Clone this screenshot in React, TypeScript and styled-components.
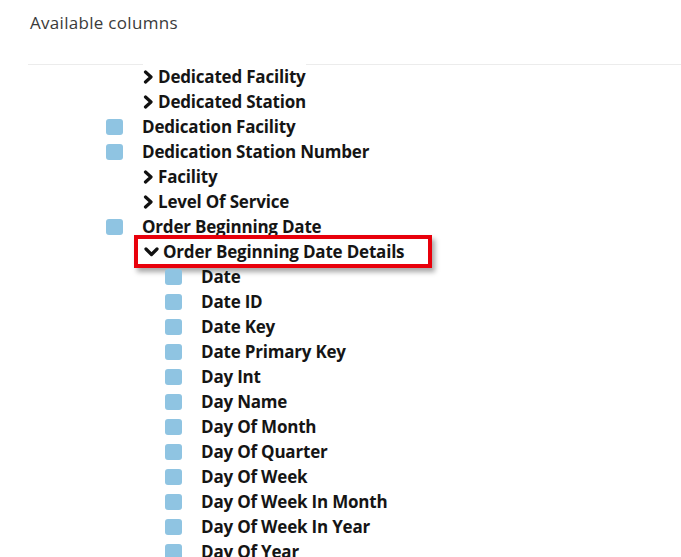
import React from 'react';
import styled, { createGlobalStyle } from 'styled-components';

const GlobalStyle = createGlobalStyle`
  html, body {
    margin: 0;
    padding: 0;
    background: #fff;
  }
  body {
    font-family: "Open Sans", "Liberation Sans", sans-serif;
    color: #151515;
  }
`;

const Page = styled.div`
  width: 681px;
  height: 557px;
  overflow: hidden;
`;

const Title = styled.h2`
  margin: 0;
  padding: 11px 0 0 30px;
  height: 64px;
  box-sizing: border-box;
  font-size: 17px;
  font-weight: 400;
  color: #3a3a3a;
  letter-spacing: 0.3px;
`;

const Divider = styled.hr`
  margin: 0 0 -1px 28px;
  border: 0;
  border-top: 1px solid #ececec;
  height: 0;
`;

const Tree = styled.ul`
  list-style: none;
  margin: 0;
  padding: 0;
`;

const Row = styled.li<{ $indent: number }>`
  display: flex;
  align-items: center;
  height: 25px;
  padding-left: ${(p) => p.$indent}px;
  font-size: 17px;
  font-weight: 700;
  letter-spacing: -0.2px;
  white-space: nowrap;
`;

const Check = styled.span`
  width: 17px;
  height: 16px;
  border-radius: 3px;
  background: #8fc4e2;
  margin-right: 19px;
  flex: none;
`;

const Folder = styled.span<{ $open?: boolean }>`
  display: inline-flex;
  align-items: center;
  height: 25px;
  padding: 0 ${(p) => (p.$open ? 24 : 0)}px 0 ${(p) => (p.$open ? 6 : 0)}px;
  box-shadow: ${(p) =>
    p.$open
      ? '0 0 0 4px #e8000b, 3px 4px 5px 4px rgba(0,0,0,0.35)'
      : 'none'};
  background: #fff;
`;

const Chevron = styled.svg`
  flex: none;
  margin-right: 4px;
`;

function Arrow({ open }: { open?: boolean }) {
  return open ? (
    <Chevron width="15" height="12" viewBox="0 0 15 12">
      <path d="M2 3 L7.5 8.5 L13 3" fill="none" stroke="#111" strokeWidth="3.2" strokeLinecap="round" strokeLinejoin="round" />
    </Chevron>
  ) : (
    <Chevron width="11" height="14" viewBox="0 0 11 14">
      <path d="M2.5 2 L8 7 L2.5 12" fill="none" stroke="#111" strokeWidth="3.2" strokeLinecap="round" strokeLinejoin="round" />
    </Chevron>
  );
}

type Item = { label: string; kind: 'check' | 'folder' | 'open'; level: number };

const items: Item[] = [
  { label: 'Dedicated Facility', kind: 'folder', level: 1 },
  { label: 'Dedicated Station', kind: 'folder', level: 1 },
  { label: 'Dedication Facility', kind: 'check', level: 1 },
  { label: 'Dedication Station Number', kind: 'check', level: 1 },
  { label: 'Facility', kind: 'folder', level: 1 },
  { label: 'Level Of Service', kind: 'folder', level: 1 },
  { label: 'Order Beginning Date', kind: 'check', level: 1 },
  { label: 'Order Beginning Date Details', kind: 'open', level: 1 },
  { label: 'Date', kind: 'check', level: 2 },
  { label: 'Date ID', kind: 'check', level: 2 },
  { label: 'Date Key', kind: 'check', level: 2 },
  { label: 'Date Primary Key', kind: 'check', level: 2 },
  { label: 'Day Int', kind: 'check', level: 2 },
  { label: 'Day Name', kind: 'check', level: 2 },
  { label: 'Day Of Month', kind: 'check', level: 2 },
  { label: 'Day Of Quarter', kind: 'check', level: 2 },
  { label: 'Day Of Week', kind: 'check', level: 2 },
  { label: 'Day Of Week In Month', kind: 'check', level: 2 },
  { label: 'Day Of Week In Year', kind: 'check', level: 2 },
  { label: 'Day Of Year', kind: 'check', level: 2 },
];

function indentFor(item: Item) {
  if (item.kind === 'check') return item.level === 1 ? 106 : 165;
  if (item.kind === 'open') return 138;
  return 143;
}

export default function App() {
  return (
    <Page>
      <GlobalStyle />
      <Title>Available columns</Title>
      <Divider />
      <Tree>
        {items.map((item) => (
          <Row key={item.label} $indent={indentFor(item)}>
            {item.kind === 'check' ? (
              <>
                <Check />
                {item.label}
              </>
            ) : (
              <Folder $open={item.kind === 'open'}>
                <Arrow open={item.kind === 'open'} />
                {item.label}
              </Folder>
            )}
          </Row>
        ))}
      </Tree>
    </Page>
  );
}
